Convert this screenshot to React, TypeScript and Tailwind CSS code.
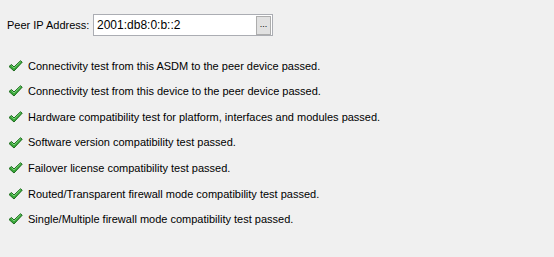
import React from 'react';

const results = [
  'Connectivity test from this ASDM to the peer device passed.',
  'Connectivity test from this device to the peer device passed.',
  'Hardware compatibility test for platform, interfaces and modules passed.',
  'Software version compatibility test passed.',
  'Failover license compatibility test passed.',
  'Routed/Transparent firewall mode compatibility test passed.',
  'Single/Multiple firewall mode compatibility test passed.',
];

const Check = () => (
  <svg width="15" height="12" viewBox="0 0 15 12" className="shrink-0">
    <path
      d="M1 6.5 L3.5 4.5 L6 7 L12.5 0.8 L14.2 2.2 L6 11 Z"
      fill="#3aa83a"
      stroke="#1c6b1c"
      strokeWidth="1"
      strokeLinejoin="round"
    />
    <path d="M3.6 5.6 L6 8 L12.6 1.8" fill="none" stroke="#8fe08f" strokeWidth="0.8" />
  </svg>
);

const App = () => {
  return (
    <div className="w-[554px] h-[257px] bg-[#f0f0f0] text-[11px] text-black" style={{ fontFamily: '"Liberation Sans", Arial, sans-serif' }}>
      <div className="flex items-center pt-[14px] pl-[7px]">
        <span className="w-[86px]">Peer IP Address:</span>
        <div className="w-[180px] h-[22px] border border-[#abadb3] bg-white flex items-center pl-[3px] pr-[1px]">
          <span className="flex-1 text-[12px]">2001:db8:0:b::2</span>
          <div className="w-[15px] h-[19px] border border-[#adadad] bg-[#e1e1e1] flex items-center justify-center text-[9px] leading-none pb-[2px]">...</div>
        </div>
      </div>
      <div className="flex flex-col pt-[17px] pl-[8px]">
        {results.map((r, i) => (
          <div key={i} className="flex items-center gap-[5px] h-[25.6px]">
            <Check />
            <span>{r}</span>
          </div>
        ))}
      </div>
    </div>
  );
};

export default App;
